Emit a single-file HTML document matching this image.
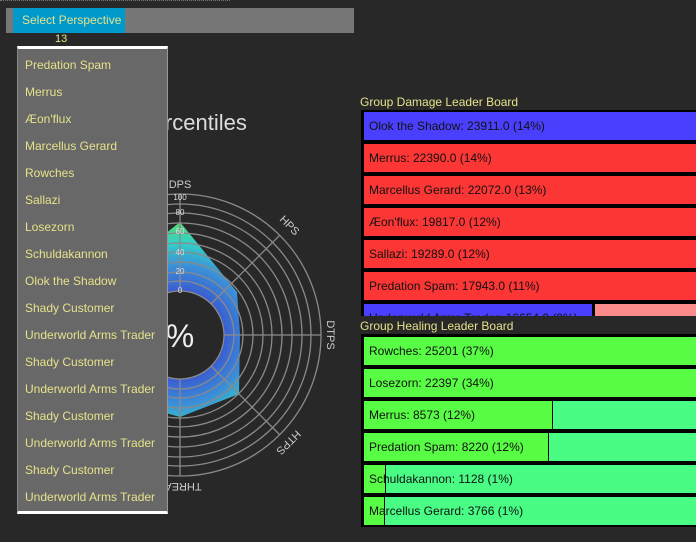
<!DOCTYPE html>
<html><head><meta charset="utf-8"><style>
*{margin:0;padding:0;box-sizing:border-box}
body{width:696px;height:542px;background:#282828;position:relative;overflow:hidden;font-family:"Segoe UI","Liberation Sans",sans-serif;font-size:12px}
.a{position:absolute;white-space:nowrap}
.bar{position:absolute;height:28px;line-height:29px;color:#111;padding-left:5px;font-size:12px}
.dd div{height:27px;line-height:27px;padding-left:7px;color:#e6e28a;font-size:12px}
</style></head><body>
<div class="a" style="left:0;top:0;width:230px;height:1px;border-top:1px dotted #777"></div>
<div class="a" style="left:6px;top:8px;width:348px;height:25px;background:#777"></div>
<div class="a" style="left:13px;top:8px;width:112px;height:25px;background:#0099cc;color:#e6e28a;line-height:25px;padding-left:9px;font-size:12px">Select Perspective</div>
<div class="a" style="left:55px;top:33px;color:#e6e28a;font-size:11px">13</div>
<div class="a" style="left:138px;top:110px;color:#ddd;font-size:22px">Percentiles</div>

<svg class="a" style="left:0;top:0" width="696" height="542">
<defs><radialGradient id="g" cx="180" cy="335" r="115" gradientUnits="userSpaceOnUse">
<stop offset="0.38" stop-color="#3a5cd0"/><stop offset="0.6" stop-color="#3b8fd8"/><stop offset="0.8" stop-color="#33d0c8"/><stop offset="1" stop-color="#5ad86a"/></radialGradient></defs>
<path fill-rule="evenodd" fill="url(#g)" d="M180,222 L237,292 L240,334 L239,394 L180,417 L120,400 L120,270 Z M224,335 A44,44 0 1 0 136,335 A44,44 0 1 0 224,335 Z"/>
<g fill="none" stroke="#8a8a8a" stroke-width="1.3">
<circle cx="180" cy="335" r="44"/><circle cx="180" cy="335" r="54"/><circle cx="180" cy="335" r="63"/><circle cx="180" cy="335" r="73"/><circle cx="180" cy="335" r="83"/><circle cx="180" cy="335" r="92"/><circle cx="180" cy="335" r="102"/><circle cx="180" cy="335" r="112"/><circle cx="180" cy="335" r="122"/><circle cx="180" cy="335" r="131"/><circle cx="180" cy="335" r="141"/>
<path d="M180,291V194M180,379V476M224,335H321M211,304L280,235M211,366L280,435"/>
</g>
<g fill="#ddd" font-size="8" font-family="Liberation Sans,sans-serif" text-anchor="middle">
<text x="180" y="200">100</text><text x="180" y="215">80</text><text x="180" y="234">60</text><text x="180" y="255">40</text><text x="180" y="274">20</text><text x="180" y="293">0</text></g>
<g fill="#ccc" font-size="11" font-family="Liberation Sans,sans-serif" text-anchor="middle">
<text x="180" y="188">DPS</text>
<text transform="translate(287,228) rotate(45)">HPS</text>
<text transform="translate(327,335) rotate(90)">DTPS</text>
<text transform="translate(286,440) rotate(135)">HTPS</text>
<text transform="translate(180,483) rotate(180)">THREAT</text></g>
<text x="180" y="347" fill="#eee" font-size="32" font-family="Liberation Sans,sans-serif" text-anchor="middle">%</text>
</svg>

<div class="a" style="left:360px;top:95px;color:#e6e28a;font-size:12px">Group Damage Leader Board</div>
<div class="a" style="left:361px;top:110px;width:335px;height:210px;background:#000"></div>
<div class="bar" style="left:364px;top:112px;width:332px;background:#4a3ffc">Olok the Shadow: 23911.0 (14%)</div>
<div class="bar" style="left:364px;top:144px;width:332px;background:#fc3535">Merrus: 22390.0 (14%)</div>
<div class="bar" style="left:364px;top:176px;width:332px;background:#fc3535">Marcellus Gerard: 22072.0 (13%)</div>
<div class="bar" style="left:364px;top:208px;width:332px;background:#fc3535">Æon'flux: 19817.0 (12%)</div>
<div class="bar" style="left:364px;top:240px;width:332px;background:#fc3535">Sallazi: 19289.0 (12%)</div>
<div class="bar" style="left:364px;top:272px;width:332px;background:#fc3535">Predation Spam: 17943.0 (11%)</div>
<div class="bar" style="left:364px;top:304px;width:228px;background:#4a3ffc">Underworld Arms Trader: 16654.0 (9%)</div>
<div class="bar" style="left:595px;top:304px;width:101px;background:#fc8c8c"></div>

<div class="a" style="left:355px;top:316px;width:341px;height:226px;background:#282828"></div>
<div class="a" style="left:360px;top:319px;color:#e6e28a;font-size:12px">Group Healing Leader Board</div>
<div class="a" style="left:361px;top:334px;width:335px;height:193px;background:#000"></div>
<div class="bar" style="left:364px;top:337px;width:332px;background:#58fc44">Rowches: 25201 (37%)</div>
<div class="bar" style="left:364px;top:369px;width:332px;background:#58fc44">Losezorn: 22397 (34%)</div>
<div class="bar" style="left:553px;top:401px;width:143px;background:#48fc84"></div>
<div class="bar" style="left:364px;top:401px;width:188px;background:#58fc44">Merrus: 8573 (12%)</div>
<div class="bar" style="left:549px;top:433px;width:147px;background:#48fc84"></div>
<div class="bar" style="left:364px;top:433px;width:184px;background:#58fc44">Predation Spam: 8220 (12%)</div>
<div class="bar" style="left:364px;top:465px;width:21px;background:#58fc44"></div>
<div class="bar" style="left:386px;top:465px;width:310px;background:#48fc84"></div>
<div class="bar" style="left:364px;top:465px;width:300px">Schuldakannon: 1128 (1%)</div>
<div class="bar" style="left:364px;top:497px;width:20px;background:#58fc44"></div>
<div class="bar" style="left:385px;top:497px;width:311px;background:#48fc84"></div>
<div class="bar" style="left:364px;top:497px;width:300px">Marcellus Gerard: 3766 (1%)</div>

<div class="a dd" style="left:17px;top:46px;width:151px;height:468px;background:#686868;border-top:3px solid #fff;border-bottom:3px solid #fff;border-left:1px solid #888;border-right:1px solid #999;padding-top:3px">
<div>Predation Spam</div><div>Merrus</div><div>Æon'flux</div><div>Marcellus Gerard</div><div>Rowches</div><div>Sallazi</div><div>Losezorn</div><div>Schuldakannon</div><div>Olok the Shadow</div><div>Shady Customer</div><div>Underworld Arms Trader</div><div>Shady Customer</div><div>Underworld Arms Trader</div><div>Shady Customer</div><div>Underworld Arms Trader</div><div>Shady Customer</div><div>Underworld Arms Trader</div>
</div>
</body></html>
